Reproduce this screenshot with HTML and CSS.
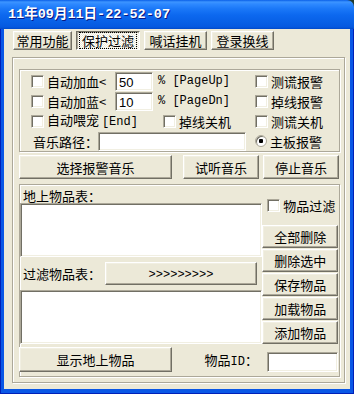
FILE: index.html
```html
<!DOCTYPE html>
<html lang="zh-CN">
<head>
    <meta charset="utf-8">
    <title>保护过滤</title>
    <link rel="stylesheet" href="styles.css">
</head>
<body>
    <div class="window">
        <div class="titlebar"><span class="title">11年09月11日-22-52-07</span></div>
        <div class="frame">
            <div class="client">
                <div class="tabs">
                    <div class="tab first">常用功能</div>
                    <div class="tab active"><span class="focus">保护过滤</span></div>
                    <div class="tab">喊话挂机</div>
                    <div class="tab">登录换线</div>
                </div>
                <div class="panel">
                    <div class="group alarm">
                        <div class="row">
                            <div class="left">
                                <span class="check"></span><span class="label pct">自动加血&lt;</span><span class="edit num">50</span><span class="hotkey mono">% [PageUp]</span>
                            </div>
                            <div class="right"><span class="check"></span><span class="label">测谎报警</span></div>
                        </div>
                        <div class="row">
                            <div class="left">
                                <span class="check"></span><span class="label pct">自动加蓝&lt;</span><span class="edit num">10</span><span class="hotkey mono">% [PageDn]</span>
                            </div>
                            <div class="right"><span class="check"></span><span class="label">掉线报警</span></div>
                        </div>
                        <div class="row">
                            <div class="left">
                                <span class="check"></span><span class="label feed">自动喂宠 <span class="mono">[End]</span></span><span class="check"></span><span class="label">掉线关机</span>
                            </div>
                            <div class="right"><span class="check"></span><span class="label">测谎关机</span></div>
                        </div>
                        <div class="row">
                            <div class="left">
                                <span class="path-label">音乐路径：</span><span class="edit path"></span>
                            </div>
                            <div class="right"><span class="radio"></span><span class="label">主板报警</span></div>
                        </div>
                    </div>

                    <div class="music-buttons">
                        <button class="btn pick">选择报警音乐</button>
                        <button class="btn play">试听音乐</button>
                        <button class="btn stop">停止音乐</button>
                    </div>

                    <div class="group items">
                        <div class="items-body">
                            <div class="items-main">
                                <div class="caption">地上物品表：</div>
                                <div class="list"></div>
                                <div class="filter-row">
                                    <span class="filter-label">过滤物品表：</span>
                                    <button class="btn arrows"><span class="mono">&gt;&gt;&gt;&gt;&gt;&gt;&gt;&gt;&gt;</span></button>
                                </div>
                                <div class="list"></div>
                            </div>
                            <div class="items-side">
                                <div class="side-check"><span class="check"></span><span class="label">物品过滤</span></div>
                                <div class="side-buttons">
                                    <button class="btn">全部删除</button>
                                    <button class="btn">删除选中</button>
                                    <button class="btn">保存物品</button>
                                    <button class="btn">加载物品</button>
                                    <button class="btn">添加物品</button>
                                </div>
                            </div>
                        </div>
                        <div class="items-foot">
                            <button class="btn show">显示地上物品</button>
                            <span class="id-label">物品<span class="mono">ID</span>：</span>
                            <span class="edit item-id"></span>
                        </div>
                    </div>
                </div>
            </div>
        </div>
    </div>
</body>
</html>
```

FILE: styles.css
```css
:root {
    --face: #ece9d8;
    --shadow: #aca899;
    --dark: #716f64;
    --light: #f1efe2;
    --frame: #0a57e6;
}

* {
    box-sizing: border-box;
    margin: 0;
    padding: 0;
}

html,
body {
    width: 354px;
    height: 394px;
    overflow: hidden;
    background: #1f3a2e;
}

body {
    font-family: "Noto Sans CJK SC", "Liberation Sans", sans-serif;
    font-size: 13px;
    color: #000;
}

.mono {
    font-family: "Liberation Mono", monospace;
    font-size: 12px;
}

.window {
    width: 354px;
    height: 394px;
    display: flex;
    flex-direction: column;
    border-top-right-radius: 7px;
    overflow: hidden;
}

.titlebar {
    height: 29px;
    flex: none;
    display: flex;
    align-items: center;
    padding-left: 8px;
    background: linear-gradient(#0a5fe8 0, #3d95ff 2px, #2e89ff 4px, #1a77f7 9px, #0c68ef 15px, #0860e6 22px, #0559e0 27px, #0049c9 29px);
}

.title {
    font-family: "Liberation Mono", "Noto Sans CJK SC", monospace;
    color: #fff;
    font-weight: bold;
    font-size: 13.5px;
    line-height: 16px;
    padding-top: 1px;
    text-shadow: 1px 1px 0 #0a1883;
}

.frame {
    flex: 1;
    padding: 0 4px 5px;
    background: var(--frame);
    box-shadow: inset 1px 0 #0020b8, inset -1px 0 #0020b8, inset 0 -1px #0020b8;
}

.client {
    height: 360px;
    background: var(--face);
    overflow: hidden;
}

/* tab buttons */
.tabs {
    display: flex;
    gap: 4px;
    padding: 2px 0 0 9px;
}

.tab {
    height: 19px;
    width: 63px;
    display: flex;
    align-items: center;
    justify-content: center;
    line-height: 15px;
    border: 1px solid;
    border-color: #fff var(--dark) var(--dark) #fff;
    box-shadow: inset -1px -1px var(--shadow), inset 1px 1px var(--light);
}

.tab.first {
    width: 59px;
}

.tab.active {
    width: 64px;
    border-color: var(--dark) #fff #fff var(--dark);
    box-shadow: inset 1px 1px var(--shadow);
    background: repeating-conic-gradient(#fff 0 25%, var(--face) 0 50%) 0 0 / 2px 2px;
}

.focus {
    outline: 1px dotted #000;
    outline-offset: 0;
    padding: 0 2px;
}

/* etched frames */
.panel,
.group {
    border: 1px solid var(--shadow);
    box-shadow: inset 1px 1px #fff, 1px 1px #fff;
}

.panel {
    width: 333px;
    height: 326px;
    margin: 7px 0 0 8px;
    padding: 11px 0 0 6px;
}

.group {
    width: 321px;
}

.alarm {
    padding: 1px 0 0 11px;
    height: 83px;
}

.row {
    height: 20px;
    display: flex;
    align-items: center;
}

.left {
    width: 224px;
    display: flex;
    align-items: center;
}

.right {
    display: flex;
    align-items: center;
}

.label {
    margin-left: 3px;
    line-height: 15px;
    white-space: nowrap;
}

.label.pct {
    width: 68px;
}

.label.feed {
    width: 116px;
}

.hotkey {
    margin-left: 5px;
    line-height: 15px;
    white-space: nowrap;
}

.path-label {
    margin-left: 2px;
    width: 65px;
    line-height: 15px;
    white-space: nowrap;
}

/* controls */
.check {
    flex: none;
    width: 13px;
    height: 13px;
    background: #fff;
    border: 1px solid;
    border-color: var(--shadow) #fff #fff var(--shadow);
    box-shadow: inset 1px 1px var(--dark), inset -1px -1px var(--light);
}

.radio {
    flex: none;
    width: 12px;
    height: 12px;
    border-radius: 50%;
    background: radial-gradient(circle, #000 0 2px, #fff 2.5px);
    border: 1px solid var(--shadow);
    box-shadow: inset 1px 1px var(--dark);
}

.edit {
    display: block;
    background: #fff;
    border: 1px solid;
    border-color: var(--shadow) #fff #fff var(--shadow);
    box-shadow: inset 1px 1px var(--dark), inset -1px -1px var(--light);
    font-family: "Liberation Sans", sans-serif;
    font-size: 13px;
    line-height: 17px;
    padding: 1px 3px 0;
}

.edit.num {
    width: 38px;
    height: 19px;
}

.edit.path {
    width: 148px;
    height: 19px;
}

.edit.item-id {
    width: 71px;
    height: 20px;
    margin: 0 1px 0 9px;
}

.btn {
    font: inherit;
    line-height: 15px;
    color: #000;
    background: var(--face);
    border: 1px solid;
    border-color: #fff var(--dark) var(--dark) #fff;
    box-shadow: inset -1px -1px var(--shadow), inset 1px 1px var(--light);
}

.music-buttons {
    display: flex;
    margin-top: 3px;
    height: 24px;
}

.music-buttons .btn {
    width: 76px;
    height: 24px;
}

.music-buttons .pick {
    width: 153px;
}

.music-buttons .play {
    margin-left: 11px;
}

.music-buttons .stop {
    margin-left: 4px;
}

/* item lists */
.items {
    margin-top: 5px;
    height: 193px;
    padding-bottom: 4px;
}

.items-body {
    display: flex;
}

.items-main {
    width: 243px;
}

.caption {
    height: 18px;
    padding: 3px 0 0 3px;
    line-height: 15px;
}

.list {
    height: 54px;
    background: #fff;
    border: 1px solid;
    border-color: var(--shadow) #fff #fff var(--shadow);
    box-shadow: inset 1px 1px var(--dark), inset -1px -1px var(--light);
}

.filter-row {
    height: 33px;
    display: flex;
    align-items: center;
    padding-left: 3px;
}

.filter-label {
    width: 82px;
    line-height: 15px;
    white-space: nowrap;
}

.btn.arrows {
    width: 152px;
    height: 23px;
}

.items-side {
    width: 77px;
}

.side-check {
    display: flex;
    align-items: center;
    margin: 14px 0 0 5px;
    height: 13px;
}

.side-buttons {
    display: flex;
    flex-direction: column;
    gap: 1px;
    margin-top: 13px;
}

.side-buttons .btn {
    width: 76px;
    height: 23px;
}

.items-foot {
    display: flex;
    align-items: flex-end;
    margin-top: 3px;
    height: 25px;
}

.btn.show {
    width: 153px;
    height: 25px;
    margin-left: -1px;
}

.id-label {
    margin-left: auto;
    line-height: 20px;
    white-space: nowrap;
}
```
